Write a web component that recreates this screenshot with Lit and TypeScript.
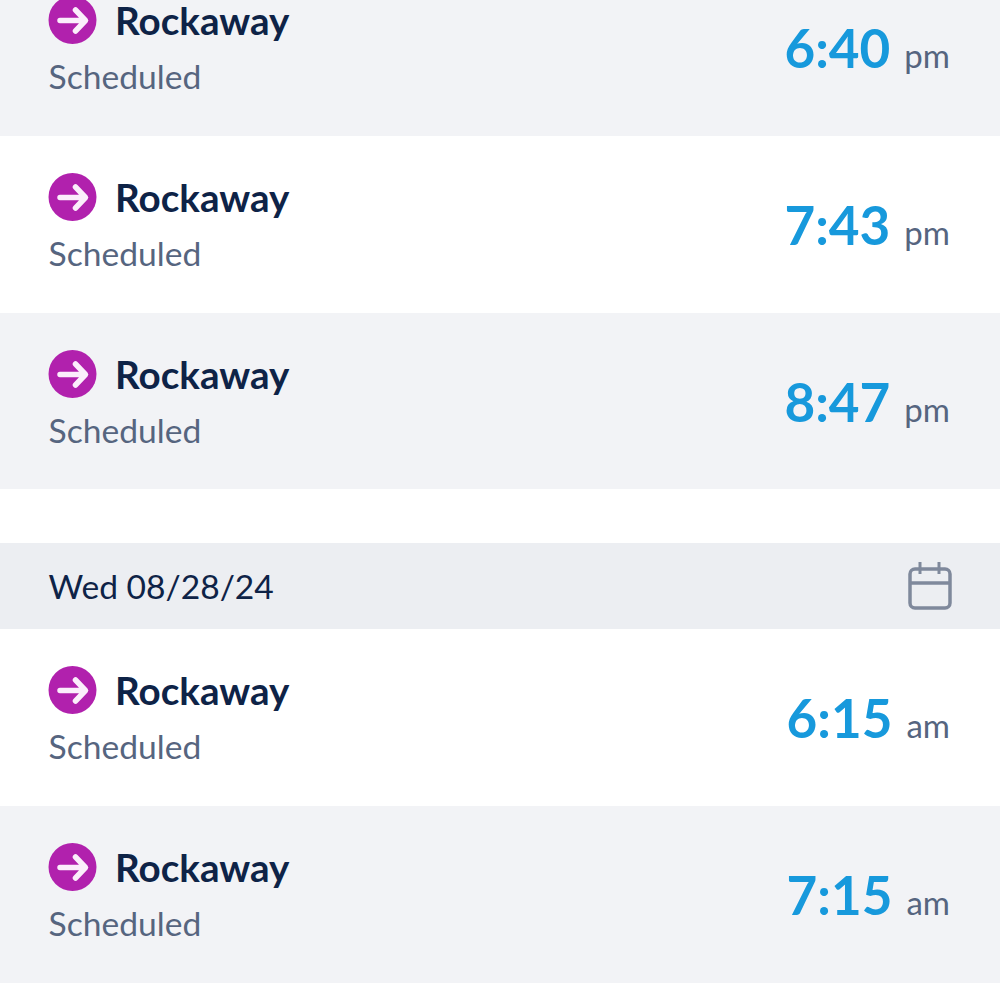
import { css, html, LitElement } from "lit";
import { customElement } from "lit/decorators.js";

const rowsA = [
  { time: "6:40", period: "pm" },
  { time: "7:43", period: "pm" },
  { time: "8:47", period: "pm" },
];

const rowsB = [
  { time: "6:15", period: "am" },
  { time: "7:15", period: "am" },
];

@customElement("app-root")
export class AppRoot extends LitElement {
  static get styles() {
    return css`
      :host {
        display: block;
        height: 1000px;
        overflow: hidden;
        background: #fff;
        font-family: Lato, sans-serif;
      }
      .list {
        margin-top: -41px;
      }
      .row {
        height: 176.75px;
        box-sizing: border-box;
        padding: 37px 50px 0 48px;
        display: flex;
        justify-content: space-between;
        background: #fff;
      }
      .row.alt {
        background: #f2f3f6;
      }
      .title {
        display: flex;
        align-items: center;
        gap: 18px;
        height: 48px;
      }
      .title svg {
        display: block;
        flex: none;
      }
      .name {
        font-size: 38.6px;
        font-weight: 700;
        color: #0e2347;
        line-height: 46px;
      }
      .status {
        margin-top: 12px;
        margin-left: 0.6px;
        font-size: 33.6px;
        line-height: 40px;
        color: #56657f;
      }
      .when {
        display: flex;
        align-items: baseline;
        gap: 14px;
        padding-top: 17px;
      }
      .time {
        font-size: 53px;
        font-weight: 700;
        line-height: 70px;
        color: #1799dc;
      }
      .period {
        font-size: 33px;
        color: #56657f;
      }
      .header {
        margin-top: 54px;
        height: 86px;
        box-sizing: border-box;
        padding: 0 48px 0 48.6px;
        display: flex;
        align-items: center;
        justify-content: space-between;
        background: #eceef2;
        font-size: 33.6px;
        color: #0e2347;
      }
    `;
  }

  renderRow(row: { time: string; period: string }, alt: boolean) {
    return html`
      <div class="row ${alt ? "alt" : ""}">
        <div>
          <div class="title">
            <svg width="49" height="48" viewBox="0 0 49 48">
              <circle cx="24.5" cy="24" r="24" fill="#b121ad" />
              <path
                d="M12 24.5H36M27.5 14 37.5 24.5 27.5 35"
                fill="none"
                stroke="#fbeefb"
                stroke-width="5.5"
                stroke-linecap="round"
                stroke-linejoin="round"
              />
            </svg>
            <span class="name">Rockaway</span>
          </div>
          <div class="status">Scheduled</div>
        </div>
        <div class="when">
          <span class="time">${row.time}</span>
          <span class="period">${row.period}</span>
        </div>
      </div>
    `;
  }

  render() {
    return html`
      <div class="list">
        ${rowsA.map((r, i) => this.renderRow(r, i % 2 == 0))}
        <div class="header">
          <span>Wed 08/28/24</span>
          <svg width="44" height="48" viewBox="0 0 44 48" fill="none" stroke="#7f899c" stroke-width="3.5">
            <rect x="2" y="7" width="40" height="39" rx="5" />
            <path d="M2 21H42" />
            <path d="M12 0V12M31 0V12" stroke-width="3" />
          </svg>
        </div>
        ${rowsB.map((r, i) => this.renderRow(r, i % 2 == 1))}
      </div>
    `;
  }
}
